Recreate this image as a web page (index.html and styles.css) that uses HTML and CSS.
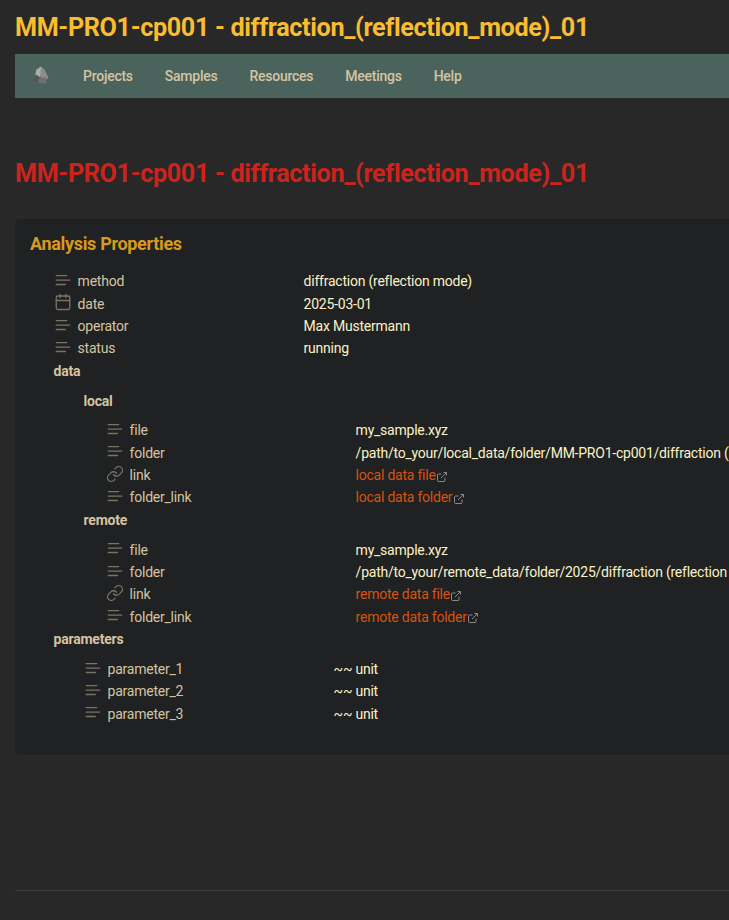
FILE: index.html
```html
<!DOCTYPE html>
<html lang="en">
<head>
<meta charset="utf-8">
<title>MM-PRO1-cp001</title>
<link rel="stylesheet" href="styles.css">
</head>
<body>
<svg class="sprite" aria-hidden="true">
  <symbol id="text" viewBox="0 0 24 24"><path d="M17 6.100H3M21 12.100H3M15.100 18H3"/></symbol>
  <symbol id="calendar" viewBox="0 0 24 24"><rect x="3" y="4" width="18" height="18" rx="2"/><path d="M16 2v4M8 2v4M3 10h18"/></symbol>
  <symbol id="link" viewBox="0 0 24 24"><path d="M10 13a5 5 0 0 0 7.540.54l3-3a5 5 0 0 0-7.070-7.070l-1.720 1.710"/><path d="M14 11a5 5 0 0 0-7.540-.54l-3 3a5 5 0 0 0 7.070 7.070l1.710-1.710"/></symbol>
  <symbol id="external" viewBox="0 0 24 24"><path d="M18 13v6a2 2 0 0 1-2 2H5a2 2 0 0 1-2-2V8a2 2 0 0 1 2-2h6M15 3h6v6M10 14L21 3"/></symbol>
</svg>
<div class="page">
  <div class="title">MM-PRO1-cp001 - diffraction_(reflection_mode)_01</div>
  <nav class="nav">
    <svg class="logo" viewBox="0 0 18 20"><path fill="#adadad" d="M8.500 0.500L3.500 4 2 11 7 12.500 9 7z"/><path fill="#8c8c8c" d="M8.500.5l3.500 3 4.500 9-2.500 2-6.500-2z"/><path fill="#555" d="M3 9L0 14.500 5.500 17.500l3-5z"/><path fill="#707070" d="M7 12h6l1.500 2-1.500 5-8-1.500z"/></svg>
    <a>Projects</a><a>Samples</a><a>Resources</a><a>Meetings</a><a>Help</a>
  </nav>
  <h1 class="heading">MM-PRO1-cp001 - diffraction_(reflection_mode)_01</h1>
  <section class="card">
    <h2>Analysis Properties</h2>
    <div class="group top">
      <div class="row"><svg class="icon"><use href="#text"/></svg><span class="key">method</span><span>diffraction (reflection mode)</span></div>
      <div class="row"><svg class="icon"><use href="#calendar"/></svg><span class="key">date</span><span>2025-03-01</span></div>
      <div class="row"><svg class="icon"><use href="#text"/></svg><span class="key">operator</span><span>Max Mustermann</span></div>
      <div class="row"><svg class="icon"><use href="#text"/></svg><span class="key">status</span><span>running</span></div>
      <div class="name">data</div>
      <div class="group">
        <div class="name">local</div>
        <div class="group deep">
          <div class="row"><svg class="icon"><use href="#text"/></svg><span class="key">file</span><span>my_sample.xyz</span></div>
          <div class="row"><svg class="icon"><use href="#text"/></svg><span class="key">folder</span><span>/path/to_your/local_data/folder/MM-PRO1-cp001/diffraction (</span></div>
          <div class="row"><svg class="icon"><use href="#link"/></svg><span class="key">link</span><a class="ext">local data file<svg><use href="#external"/></svg></a></div>
          <div class="row"><svg class="icon"><use href="#text"/></svg><span class="key">folder_link</span><a class="ext">local data folder<svg><use href="#external"/></svg></a></div>
        </div>
        <div class="name">remote</div>
        <div class="group deep">
          <div class="row"><svg class="icon"><use href="#text"/></svg><span class="key">file</span><span>my_sample.xyz</span></div>
          <div class="row"><svg class="icon"><use href="#text"/></svg><span class="key">folder</span><span>/path/to_your/remote_data/folder/2025/diffraction (reflection</span></div>
          <div class="row"><svg class="icon"><use href="#link"/></svg><span class="key">link</span><a class="ext">remote data file<svg><use href="#external"/></svg></a></div>
          <div class="row"><svg class="icon"><use href="#text"/></svg><span class="key">folder_link</span><a class="ext">remote data folder<svg><use href="#external"/></svg></a></div>
        </div>
      </div>
      <div class="name">parameters</div>
      <div class="group">
        <div class="row"><svg class="icon"><use href="#text"/></svg><span class="key">parameter_1</span><span>~~ unit</span></div>
        <div class="row"><svg class="icon"><use href="#text"/></svg><span class="key">parameter_2</span><span>~~ unit</span></div>
        <div class="row"><svg class="icon"><use href="#text"/></svg><span class="key">parameter_3</span><span>~~ unit</span></div>
      </div>
    </div>
  </section>
  <hr>
</div>
</body>
</html>
```
FILE: styles.css
```css
* { box-sizing: border-box; }
body {
  margin: 0;
  height: 920px;
  overflow: hidden;
  background: #282828;
  color: #fbf1c7;
  font: 14px/22.35px Roboto, sans-serif;
  letter-spacing: -0.0165em;
}
.sprite { display: none; }
.page { padding-left: 15px; }
.title, .heading {
  margin: 0;
  font-size: 25.2px;
  line-height: 34px;
  font-weight: 700;
  letter-spacing: -0.0145em;
  white-space: nowrap;
}
.title { padding-top: 11px; height: 54px; color: #fabd2f; }
.nav {
  display: flex;
  align-items: center;
  height: 44px;
  padding-left: 18px;
  background: #4b635d;
  color: #d5c4a1;
  font-weight: 500;
  letter-spacing: -0.018em;
}
.nav a { margin-right: 32px; }
.logo { width: 17px; height: 19px; margin: -2px 33px 0 0; }
.heading { margin-top: 59px; color: #cc241d; }
.card {
  height: 536px;
  margin-top: 28px;
  padding: 12px 0 0 15px;
  overflow: hidden;
  background: #1f2122;
  border-radius: 5px 0 0 5px;
}
.card h2 { margin: 0; color: #d79921; font-size: 18px; line-height: 25px; font-weight: 700; letter-spacing: -0.018em; }
.group { margin-top: 7.5px; padding-left: 30px; }
.group.top { margin-top: 14.4px; padding-left: 23.6px; }
.group.deep { padding-left: 22px; }
.row { display: flex; align-items: center; height: 22.35px; white-space: nowrap; }
.name { height: 22.35px; color: #d5c4a1; font-weight: 700; }
.icon {
  flex: none;
  width: 18px;
  height: 18px;
  margin: -3px 6px 0 0;
  fill: none;
  stroke: #7c7463;
  stroke-width: 1.75;
  stroke-linecap: round;
  stroke-linejoin: round;
}
.key { flex: none; width: 226px; color: #d5c4a1; }
.ext { color: #d9520f; }
.ext svg {
  width: 12px;
  height: 12px;
  margin-left: 0.5px;
  vertical-align: -2.5px;
  fill: none;
  stroke: #8a8a8a;
  stroke-width: 2;
}
hr { margin: 135px 0 0; border: 0; border-top: 1px solid #3c3c3c; }
```
